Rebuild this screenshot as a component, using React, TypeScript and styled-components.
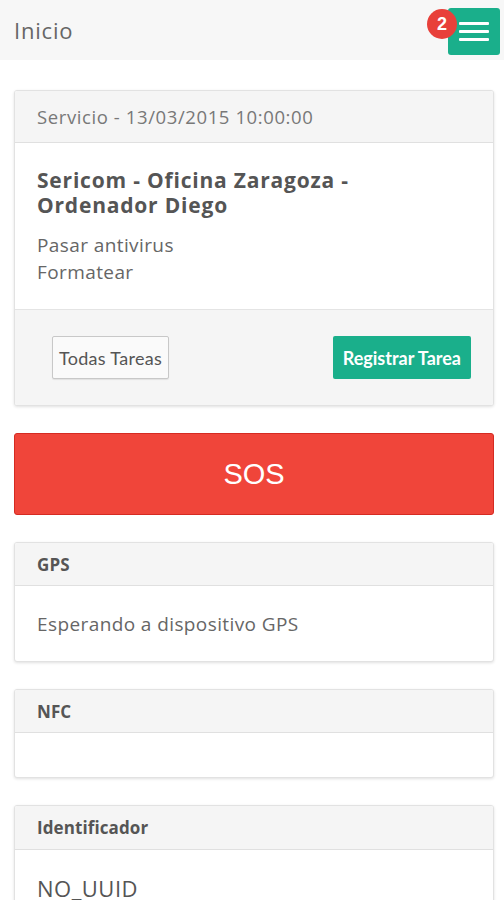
import React from "react";
import styled, { createGlobalStyle } from "styled-components";

const GlobalStyle = createGlobalStyle`
  body {
    margin: 0;
    background: #ffffff;
    font-family: "Open Sans", "Noto Sans", sans-serif;
  }
`;

const Page = styled.div`
  width: 504px;
  min-height: 900px;
  background: #ffffff;
`;

const TopBar = styled.header`
  height: 60px;
  background: #f7f7f7;
  display: flex;
  align-items: center;
  justify-content: space-between;
  padding: 0 4px 0 14px;
  box-sizing: border-box;
`;

const Title = styled.h1`
  margin: 0;
  font-size: 22px;
  letter-spacing: 0.8px;
  font-weight: 400;
  color: #666666;
`;

const MenuButton = styled.button`
  position: relative;
  width: 52px;
  height: 47px;
  margin-top: 3px;
  border: 0;
  border-radius: 3px;
  background: #1aaf8b;
  display: flex;
  flex-direction: column;
  align-items: flex-end;
  justify-content: center;
  gap: 5px;
  padding: 0 11px 0 0;
  box-sizing: border-box;
`;

const MenuLine = styled.span`
  display: block;
  width: 30px;
  height: 3px;
  background: #ffffff;
  border-radius: 1px;
`;

const Badge = styled.span`
  position: absolute;
  left: -21px;
  top: 1px;
  width: 30px;
  height: 30px;
  border-radius: 50%;
  background: #e8403a;
  color: #ffffff;
  font-size: 18px;
  font-weight: 700;
  display: flex;
  align-items: center;
  justify-content: center;
`;

const Content = styled.main`
  display: flex;
  flex-direction: column;
  gap: 27px;
  padding: 30px 10px 0 14px;
`;

const Card = styled.section`
  background: #ffffff;
  border: 1px solid #e2e2e2;
  border-radius: 3px;
  box-shadow: 0 1px 3px rgba(0, 0, 0, 0.12);
  overflow: hidden;
`;

const CardHeader = styled.div<{ $h: number; $small?: boolean }>`
  height: ${(p) => p.$h}px;
  background: #f5f5f5;
  border-bottom: 1px solid #e0e0e0;
  display: flex;
  align-items: center;
  padding: 0 22px;
  box-sizing: border-box;
  font-size: ${(p) => (p.$small ? 17 : 18.5)}px;
  letter-spacing: ${(p) => (p.$small ? 0.1 : 0.6)}px;
  font-weight: ${(p) => (p.$small ? 700 : 400)};
  color: ${(p) => (p.$small ? "#555555" : "#787878")};
`;

const CardBody = styled.div<{ $h?: number }>`
  ${(p) => (p.$h ? `height: ${p.$h}px;` : "")}
  padding: 0 22px;
  box-sizing: border-box;
  display: flex;
  flex-direction: column;
  justify-content: center;
  color: #666666;
  font-size: 19px;
  letter-spacing: 0.4px;
`;

const ServiceBody = styled.div`
  padding: 25px 22px 23px;
  color: #666666;
`;

const ServiceTitle = styled.h2`
  margin: 0 0 14px;
  font-size: 21px;
  letter-spacing: 0.8px;
  line-height: 25px;
  font-weight: 700;
  color: #555555;
`;

const TaskLine = styled.div`
  font-size: 19px;
  letter-spacing: 0.4px;
  line-height: 27px;
`;

const CardFooter = styled.div`
  height: 96px;
  background: #f5f5f5;
  border-top: 1px solid #e4e4e4;
  display: flex;
  align-items: center;
  justify-content: space-between;
  padding: 0 22px 0 37px;
  box-sizing: border-box;
`;

const FooterButton = styled.button<{ $primary?: boolean }>`
  height: 43px;
  padding: 0 ${(p) => (p.$primary ? 10 : 6)}px;
  border-radius: 2px;
  font-family: "Lato", "Open Sans", sans-serif;
  font-size: 18px;
  letter-spacing: ${(p) => (p.$primary ? 0 : 0.3)}px;
  font-weight: ${(p) => (p.$primary ? 700 : 400)};
  color: ${(p) => (p.$primary ? "#ffffff" : "#555555")};
  background: ${(p) => (p.$primary ? "#1aaf8b" : "#fafafa")};
  border: ${(p) => (p.$primary ? "0" : "1px solid #c8c8c8")};
  box-shadow: ${(p) => (p.$primary ? "none" : "0 1px 1px rgba(0,0,0,0.08)")};
`;

const SosButton = styled.button`
  height: 82px;
  width: 100%;
  background: #f0453a;
  border: 1px solid #d52b22;
  border-radius: 3px;
  color: #ffffff;
  font-family: "Liberation Sans", Arial, sans-serif;
  font-size: 29px;
`;

const BigValue = styled.div`
  font-size: 22px;
  letter-spacing: 0.5px;
  color: #555555;
`;

export default function App() {
  return (
    <Page>
      <GlobalStyle />
      <TopBar>
        <Title>Inicio</Title>
        <MenuButton aria-label="menu">
          <Badge>2</Badge>
          <MenuLine />
          <MenuLine />
          <MenuLine />
        </MenuButton>
      </TopBar>
      <Content>
        <Card>
          <CardHeader $h={52}>Servicio - 13/03/2015 10:00:00</CardHeader>
          <ServiceBody>
            <ServiceTitle>
              Sericom - Oficina Zaragoza -<br />
              Ordenador Diego
            </ServiceTitle>
            <TaskLine>Pasar antivirus</TaskLine>
            <TaskLine>Formatear</TaskLine>
          </ServiceBody>
          <CardFooter>
            <FooterButton>Todas Tareas</FooterButton>
            <FooterButton $primary>Registrar Tarea</FooterButton>
          </CardFooter>
        </Card>

        <SosButton>SOS</SosButton>

        <Card>
          <CardHeader $h={43} $small>GPS</CardHeader>
          <CardBody $h={75}>Esperando a dispositivo GPS</CardBody>
        </Card>

        <Card>
          <CardHeader $h={43} $small>NFC</CardHeader>
          <CardBody $h={44} />
        </Card>

        <Card>
          <CardHeader $h={44} $small>Identificador</CardHeader>
          <CardBody $h={76}>
            <BigValue>NO_UUID</BigValue>
          </CardBody>
        </Card>
      </Content>
    </Page>
  );
}
